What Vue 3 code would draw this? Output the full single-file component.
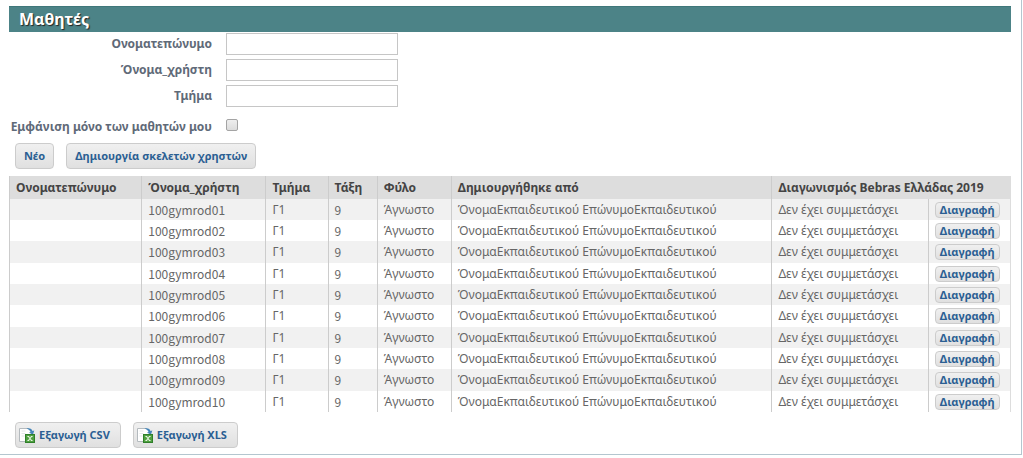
<script setup>
import { ref } from 'vue'

const fields = [
  { id: 'fullname', label: 'Ονοματεπώνυμο' },
  { id: 'username', label: 'Όνομα_χρήστη' },
  { id: 'section', label: 'Τμήμα' },
]
const filters = ref({ fullname: '', username: '', section: '' })
const onlyMine = ref(false)
const exportsList = ['Εξαγωγή CSV', 'Εξαγωγή XLS']
const students = Array.from({ length: 10 }, (_, i) => ({
  username: '100gymrod' + String(i + 1).padStart(2, '0'),
  section: 'Γ1',
  grade: 9,
  gender: 'Άγνωστο',
  creator: 'ΌνομαΕκπαιδευτικού ΕπώνυμοΕκπαιδευτικού',
  contest: 'Δεν έχει συμμετάσχει',
}))
</script>

<template>
  <main class="panel">
    <h1 class="title">Μαθητές</h1>

    <form class="filters" @submit.prevent>
      <div v-for="f in fields" :key="f.id" class="field">
        <label :for="f.id">{{ f.label }}</label>
        <input :id="f.id" v-model="filters[f.id]" type="text" />
      </div>
      <div class="field check">
        <label for="mine">Εμφάνιση μόνο των μαθητών μου</label>
        <input id="mine" v-model="onlyMine" type="checkbox" />
      </div>
    </form>

    <div class="actions">
      <button type="button" class="btn">Νέο</button>
      <button type="button" class="btn">Δημιουργία σκελετών χρηστών</button>
    </div>

    <table class="grid">
      <colgroup>
        <col class="c-name" />
        <col class="c-user" />
        <col class="c-section" />
        <col class="c-grade" />
        <col class="c-gender" />
        <col class="c-creator" />
        <col class="c-contest" />
        <col />
      </colgroup>
      <thead>
        <tr>
          <th scope="col">Ονοματεπώνυμο</th>
          <th scope="col">Όνομα_χρήστη</th>
          <th scope="col">Τμήμα</th>
          <th scope="col">Τάξη</th>
          <th scope="col">Φύλο</th>
          <th scope="col">Δημιουργήθηκε από</th>
          <th scope="colgroup" colspan="2">Διαγωνισμός Bebras Ελλάδας 2019</th>
        </tr>
      </thead>
      <tbody>
        <tr v-for="s in students" :key="s.username">
          <td></td>
          <td class="latin">{{ s.username }}</td>
          <td>{{ s.section }}</td>
          <td class="latin">{{ s.grade }}</td>
          <td>{{ s.gender }}</td>
          <td>{{ s.creator }}</td>
          <td>{{ s.contest }}</td>
          <td><button type="button" class="btn small">Διαγραφή</button></td>
        </tr>
      </tbody>
    </table>

    <div class="actions exports">
      <button v-for="e in exportsList" :key="e" type="button" class="btn export">
        <svg width="16" height="16" viewBox="0 0 16 16" aria-hidden="true">
          <path d="M.5 1.500h9l3 3v10H.5z" fill="#fff" stroke="#b4babe" />
          <path d="M2.500 4h4M2.500 6.500h4M2.500 9h3" stroke="#e3e6e8" />
          <path d="M7.500 1.500c3-1 5.500.2 6 2.500l1.800-.6-1.300 4-4-1.600 1.600-.7C11 3.600 9.800 2.500 7.500 1.500z" fill="#4384b8" />
          <rect x="6.500" y="7.500" width="9" height="8" fill="#4fa040" stroke="#2f7f2a" />
          <path d="M8.500 9.500h1.500l1 1.200 1-1.200h1.500M8.500 13.500h1.500l1-1.200 1 1.200h1.500M9.200 9.500l3.600 4M12.800 9.500l-3.600 4" fill="none" stroke="#e8f5e3" />
        </svg>
        <span>{{ e }}</span>
      </button>
    </div>
  </main>
</template>

<style>
body {
  background: #fff;
}
</style>

<style scoped>
.panel {
  box-sizing: border-box;
  margin-right: 1px;
  padding: 6px 10px 6px 9px;
  border-right: 1px solid #b4c6cf;
  border-bottom: 1px solid #b4c6cf;
  font: 12px/16px "Noto Sans", "Open Sans", sans-serif;
  color: #666;
}
.title {
  margin: 0;
  padding: 0 10px;
  background: #4c8387;
  border-top: 1px solid #3f777a;
  color: #fff;
  font-size: 16px;
  font-weight: 700;
  line-height: 25px;
  text-shadow: 1px 1px 1px #222;
}
.filters {
  display: flex;
  flex-direction: column;
  gap: 4px;
  padding-top: 1px;
}
.field {
  display: flex;
  align-items: center;
  gap: 14px;
}
.field label {
  width: 203px;
  text-align: right;
  font-weight: 700;
  color: #5f6a78;
  white-space: nowrap;
}
.field input[type="text"] {
  box-sizing: border-box;
  width: 172px;
  height: 22px;
  margin: 0;
  padding: 0 4px;
  border: 1px solid #c6c6c6;
  background: #fff;
  font: inherit;
  color: #444;
}
.check {
  align-items: flex-start;
  padding-top: 8px;
}
.check input {
  appearance: none;
  box-sizing: border-box;
  width: 12px;
  height: 12px;
  margin: 0;
  border: 1px solid #a4a4a4;
  border-radius: 2px;
  background: linear-gradient(#eee, #dcdcdc);
}
.check input:checked {
  background: #2b5f93;
}
.actions {
  display: flex;
  gap: 12px;
  padding: 8px 6px 7px;
}
.btn {
  box-sizing: border-box;
  height: 26px;
  padding: 0 8px;
  border: 1px solid #ccc;
  border-radius: 4px;
  background: linear-gradient(#f0f0f0, #e0e0e0);
  color: #2b5f93;
  font: 700 11px/16px "Noto Sans", "Open Sans", sans-serif;
  white-space: nowrap;
}
.grid {
  width: 100%;
  table-layout: fixed;
  border-collapse: separate;
  border-spacing: 0;
}
.c-name { width: 13.2%; }
.c-user { width: 12.4%; }
.c-section { width: 6.2%; }
.c-grade { width: 4.9%; }
.c-gender { width: 7.4%; }
.c-creator { width: 32%; }
.c-contest { width: 15.6%; }
th,
td {
  padding: 0 6px;
  border-left: 1px solid #ccc;
  text-align: left;
  white-space: nowrap;
}
th:last-child,
td:last-child {
  border-right: 1px solid #ddd;
}
th {
  height: 23px;
  background: #ddd;
  color: #444;
  font-weight: 700;
}
td {
  height: 21px;
}
tr:nth-child(3n) td {
  height: 22px;
}
.latin {
  font-family: "Noto Sans CJK JP", "Noto Sans", sans-serif;
}
tbody tr:nth-child(odd) {
  background: #f1f1f1;
}
.btn.small {
  display: block;
  height: 16px;
  padding: 0 4px;
  line-height: 14px;
}
.exports {
  padding: 10px 6px 0;
}
.export {
  display: flex;
  align-items: center;
  gap: 4px;
  padding: 0 10px 0 3px;
}
</style>
